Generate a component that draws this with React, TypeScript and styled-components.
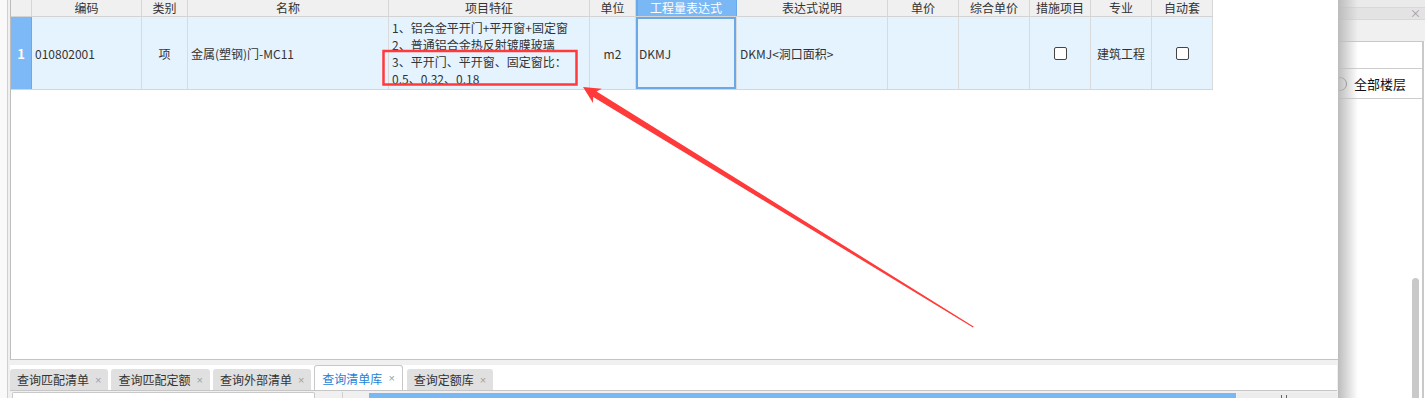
import React from "react";
import styled, { createGlobalStyle } from "styled-components";

const GlobalStyle = createGlobalStyle`
  html, body {
    margin: 0;
    padding: 0;
    background: #fff;
  }
  body {
    font-family: "Noto Sans CJK SC", "Microsoft YaHei", sans-serif;
    font-size: 12px;
    color: #333;
  }
`;

const COLS = "21px 110px 46px 201px 201px 46px 101px 151px 71px 71px 61px 61px 61px";

const Screen = styled.div`
  position: relative;
  display: flex;
  width: 1425px;
  height: 398px;
  overflow: hidden;
`;

const Rail = styled.div`
  width: 7px;
  flex: none;
  background: #f9f9f9;
  border-right: 1px solid #cfcfcf;
`;

const Main = styled.div`
  width: 1330px;
  flex: none;
  display: flex;
  flex-direction: column;
  background: #f0f0f0;
  padding-left: 2px;
  box-sizing: border-box;
`;

const GridFrame = styled.div`
  height: 360px;
  flex: none;
  background: #fff;
  border-left: 1px solid #bdbdbd;
  border-bottom: 1px solid #c4c4c4;
  box-sizing: border-box;
`;

const HeaderRow = styled.div`
  display: grid;
  grid-template-columns: ${COLS};
  width: max-content;
  height: 16px;
  border-bottom: 1px solid #d3d3d3;
`;

const HeadCell = styled.div<{ $active?: boolean }>`
  background: ${(p) => (p.$active ? "#7ab8f5" : "#f0f0f0")};
  color: ${(p) => (p.$active ? "#fff" : "#333")};
  border-right: 1px solid ${(p) => (p.$active ? "#6aa8e8" : "#d6d6d6")};
  box-shadow: ${(p) => (p.$active ? "inset 2px 0 0 #6aa8e8" : "none")};
  text-align: center;
  line-height: 15px;
  font-size: 12px;
  overflow: hidden;
  white-space: nowrap;
`;

const DataRow = styled.div`
  display: grid;
  grid-template-columns: ${COLS};
  width: max-content;
  height: 72px;
  background: #e5f3ff;
  border-bottom: 1px solid #d6d6d6;
`;

const Cell = styled.div<{ $center?: boolean; $selected?: boolean }>`
  display: flex;
  align-items: center;
  justify-content: ${(p) => (p.$center ? "center" : "flex-start")};
  padding: 0 3px;
  border-right: 1px solid #dadada;
  box-shadow: ${(p) => (p.$selected ? "inset 0 0 0 2px #6aa8e8" : "none")};
  white-space: nowrap;
  overflow: hidden;
`;

const RowNum = styled.div`
  display: flex;
  align-items: center;
  justify-content: center;
  background: #7db9f6;
  color: #fff;
  font-weight: bold;
  font-size: 13px;
  border-right: 1px solid #6aa8e8;
`;

const Lines = styled.div`
  display: flex;
  flex-direction: column;
  justify-content: center;
  padding: 0 3px;
  border-right: 1px solid #dadada;
  line-height: 17px;
  white-space: nowrap;
`;

const Check = styled.span`
  width: 13px;
  height: 13px;
  box-sizing: border-box;
  border: 1px solid #444;
  border-radius: 2px;
  background: #fff;
`;

const TabStrip = styled.div`
  margin-top: 5px;
  height: 25px;
  flex: none;
  display: flex;
  align-items: flex-end;
  background: #fff;
  width: 1327px;
`;

const Tab = styled.div<{ $active?: boolean; $gap?: number }>`
  display: flex;
  align-items: center;
  gap: 6px;
  height: ${(p) => (p.$active ? 25 : 21)}px;
  margin-right: ${(p) => p.$gap ?? 3}px;
  padding: 0 7px 0 7px;
  box-sizing: border-box;
  border-radius: 3px 3px 0 0;
  background: ${(p) => (p.$active ? "#fff" : "#e0e0e0")};
  border: ${(p) => (p.$active ? "1px solid #c8c8c8" : "none")};
  border-bottom: none;
  color: ${(p) => (p.$active ? "#1f7fd6" : "#333")};
  font-size: 12px;
  white-space: nowrap;
`;

const TabClose = styled.span`
  color: #a0a0a0;
  font-family: "Liberation Sans", Arial, sans-serif;
  font-size: 11px;
`;

const BottomPane = styled.div`
  flex: 1;
  display: flex;
  align-items: flex-end;
  border-top: 1px solid #c6c6c6;
  background: #f0f0f0;
  width: 1327px;
`;

const SideBox = styled.div`
  margin-left: 2px;
  width: 301px;
  height: 5px;
  background: #fff;
  border: 1px solid #c9c9c9;
  border-bottom: none;
  border-radius: 2px 2px 0 0;
`;

const Splitter = styled.div`
  margin-left: 27px;
  width: 1px;
  height: 6px;
  background: #d0d0d0;
`;

const BlueHead = styled.div`
  margin-left: 26px;
  width: 867px;
  height: 5px;
  background: #7ab8f5;
`;

const GrayHead = styled.div`
  margin-left: 1px;
  width: 100px;
  height: 5px;
  background: #ececec;
  position: relative;
  &::after {
    content: "";
    position: absolute;
    left: 44px;
    top: 2px;
    width: 4px;
    height: 3px;
    border-left: 1px solid #666;
    border-right: 1px solid #666;
  }
`;

const Side = styled.div`
  position: relative;
  flex: 1;
  display: flex;
  flex-direction: column;
  background: #fff;
  overflow: hidden;
  &::before {
    content: "";
    position: absolute;
    left: 0;
    top: 0;
    bottom: 0;
    width: 20px;
    background: linear-gradient(to right, #bcbcbc, rgba(255, 255, 255, 0));
    z-index: 2;
  }
`;

const SideTop = styled.div`
  height: 8px;
  background: #eaeaea;
`;

const SideTitle = styled.div`
  height: 11px;
  background: #e3e3e3;
  border-top: 1px solid #d8d8d8;
  border-bottom: 1px solid #d8d8d8;
  box-sizing: content-box;
  display: flex;
  justify-content: flex-end;
  align-items: center;
  padding-right: 4px;
  color: #9a9a9a;
  font-size: 11px;
  line-height: 11px;
  margin-top: -1px;
`;

const SideBar = styled.div`
  height: 21px;
  background: #f0f0f0;
`;

const SideBody = styled.div`
  flex: 1;
  display: flex;
  flex-direction: column;
  border-right: 2px solid #c9c9c9;
  margin-right: 1px;
  position: relative;
`;

const Field = styled.div`
  height: 26px;
  border-top: 1px solid #c8c8c8;
  background: #fff;
`;

const RadioRow = styled.div`
  height: 29px;
  border-top: 1px solid #cdcdcd;
  border-bottom: 1px solid #cdcdcd;
  display: flex;
  align-items: center;
  gap: 7px;
  font-size: 13px;
  color: #111;
  white-space: nowrap;
`;

const Radio = styled.span`
  width: 14px;
  height: 14px;
  margin-left: -5px;
  box-sizing: border-box;
  border: 1px solid #666;
  border-radius: 50%;
  flex: none;
`;

const Thumb = styled.div`
  position: absolute;
  right: 3px;
  top: 237px;
  width: 7px;
  height: 140px;
  border-radius: 4px;
  background: #c9c9c9;
`;

const Overlay = styled.svg`
  position: absolute;
  left: 0;
  top: 0;
  pointer-events: none;
`;

const headers = [
  "",
  "编码",
  "类别",
  "名称",
  "项目特征",
  "单位",
  "工程量表达式",
  "表达式说明",
  "单价",
  "综合单价",
  "措施项目",
  "专业",
  "自动套",
];

const features = [
  "1、铝合金平开门+平开窗+固定窗",
  "2、普通铝合金热反射镀膜玻璃",
  "3、平开门、平开窗、固定窗比：",
  "0.5、0.32、0.18",
];

const tabs = [
  { label: "查询匹配清单" },
  { label: "查询匹配定额" },
  { label: "查询外部清单" },
  { label: "查询清单库", active: true, gap: 4 },
  { label: "查询定额库" },
];

export default function App() {
  return (
    <>
      <GlobalStyle />
      <Screen>
        <Rail />
        <Main>
          <GridFrame>
            <HeaderRow>
              {headers.map((h, i) => (
                <HeadCell key={i} $active={i === 6}>
                  {h}
                </HeadCell>
              ))}
            </HeaderRow>
            <DataRow>
              <RowNum>1</RowNum>
              <Cell>010802001</Cell>
              <Cell $center>项</Cell>
              <Cell>金属(塑钢)门-MC11</Cell>
              <Lines>
                {features.map((f) => (
                  <div key={f}>{f}</div>
                ))}
              </Lines>
              <Cell $center>m2</Cell>
              <Cell $selected>DKMJ</Cell>
              <Cell>DKMJ&lt;洞口面积&gt;</Cell>
              <Cell />
              <Cell />
              <Cell $center>
                <Check />
              </Cell>
              <Cell $center>建筑工程</Cell>
              <Cell $center>
                <Check />
              </Cell>
            </DataRow>
          </GridFrame>
          <TabStrip>
            {tabs.map((t) => (
              <Tab key={t.label} $active={t.active} $gap={t.gap}>
                {t.label}
                <TabClose>×</TabClose>
              </Tab>
            ))}
          </TabStrip>
          <BottomPane>
            <SideBox />
            <Splitter />
            <BlueHead />
            <GrayHead />
          </BottomPane>
        </Main>
        <Side>
          <SideTop />
          <SideTitle>×</SideTitle>
          <SideBar />
          <SideBody>
            <Field />
            <RadioRow>
              <Radio />
              全部楼层
            </RadioRow>
            <Thumb />
          </SideBody>
        </Side>
        <Overlay width="1425" height="398" viewBox="0 0 1425 398">
          <rect
            x="383.5"
            y="51"
            width="193"
            height="33.5"
            fill="none"
            stroke="#ff3a3a"
            strokeWidth="2.5"
          />
          <path
            d="M583 87 L593 103.1 L593.2 97 L973 327.5 L973.6 326.4 L596.6 91.6 L601.9 88.7 Z"
            fill="#ff3a3a"
          />
        </Overlay>
      </Screen>
    </>
  );
}
